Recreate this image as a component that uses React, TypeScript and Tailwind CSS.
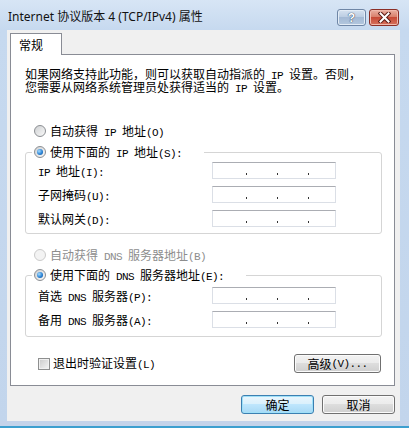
import React from "react";

const CJK = "font-['Noto_Sans_CJK_SC',sans-serif]";

function T({ s }: { s: string }) {
  const parts = s.split(/([\x00-\xff]+)/).filter((p) => p.length > 0);
  return (
    <>
      {parts.map((p, i) =>
        /^[\x00-\xff]+$/.test(p) ? (
          <span
            key={i}
            className="font-['Liberation_Mono',monospace] text-[11px] tracking-[-0.6px] whitespace-pre"
          >
            {p}
          </span>
        ) : (
          <span key={i}>{p}</span>
        )
      )}
    </>
  );
}

function Radio({ checked, disabled }: { checked?: boolean; disabled?: boolean }) {
  return (
    <span
      className={
        disabled
          ? "w-[12px] h-[12px] rounded-full border border-[#cbcbcb] bg-[#f3f3f3] flex items-center justify-center shrink-0"
          : "w-[12px] h-[12px] rounded-full border border-[#8b8e92] bg-[linear-gradient(135deg,#cfd1d3,#f9f9f9)] flex items-center justify-center shrink-0"
      }
    >
      {checked && (
        <span className="w-[6px] h-[6px] rounded-full bg-[radial-gradient(circle_at_35%_35%,#a6dcff,#2c84d6_55%,#0b4c93)]" />
      )}
    </span>
  );
}

function Checkbox() {
  return (
    <span className="w-[12px] h-[12px] border border-[#8e8f8f] bg-[linear-gradient(135deg,#c9c9c9,#f5f5f5)] shadow-[inset_0_0_0_1px_#f0f0f0] shrink-0" />
  );
}

function IpBox() {
  return (
    <div className="w-[124px] h-[17px] bg-white border border-[#dbdfe6] border-t-[#abadb3] flex items-end pb-[3px] pl-[33px] gap-[30px]">
      <span className="w-[1px] h-[2px] bg-[#333]" />
      <span className="w-[1px] h-[2px] bg-[#333]" />
      <span className="w-[1px] h-[2px] bg-[#333]" />
    </div>
  );
}

function Row({ label }: { label: string }) {
  return (
    <div className="flex items-center h-[17px]">
      <div className="w-[174px] pt-[2px]">
        <T s={label} />
      </div>
      <IpBox />
    </div>
  );
}

function Btn({ label, def, w }: { label: React.ReactNode; def?: boolean; w: string }) {
  return (
    <div
      className={
        (def
          ? "border-[#3c7fb1] bg-[linear-gradient(#eaf6fd,#d9f0fc_50%,#bee6fd_50%,#a7d9f5)] shadow-[inset_0_0_0_1px_#9fe0f8] "
          : "border-[#707070] bg-[linear-gradient(#f2f2f2,#ebebeb_50%,#dddddd_50%,#cfcfcf)] shadow-[inset_0_0_0_1px_#fbfbfb] ") +
        w +
        " h-[19px] border rounded-[3px] flex items-center justify-center text-[12px] leading-[14px] text-black"
      }
    >
      {label}
    </div>
  );
}

export default function App() {
  return (
    <div className="w-[409px] h-[428px] bg-[linear-gradient(180deg,#d7e5f5,#c6d9ef_30px,#c2d5ec)] flex flex-col overflow-hidden">
      {/* title bar */}
      <div className="h-[30px] flex justify-between pl-[8px] pr-[10px] shrink-0">
        <div className="pt-[9px] text-[12px] leading-[16px] text-[#111] font-['Noto_Sans','Noto_Sans_CJK_SC',sans-serif]">
          Internet 协议版本 4 (TCP/IPv4) 属性
        </div>
        <div className="pt-[9px] flex gap-[3px]">
          <div className="w-[29px] h-[17px] rounded-[3px] border border-[#6f86a6] bg-[linear-gradient(#d6e2f0,#b9cbe1_50%,#a4bad5_50%,#b3c7de)] shadow-[inset_0_0_0_1px_#e3ecf6] flex items-center justify-center">
            <span className="text-white text-[12px] leading-[12px] font-bold font-['Liberation_Sans',sans-serif] [text-shadow:0_0_1px_#2c3e57,0_0_1px_#2c3e57]">
              ?
            </span>
          </div>
          <div className="w-[30px] h-[17px] rounded-[3px] border border-[#8b2e26] bg-[linear-gradient(#eab0a2,#d9806c_45%,#c74a36_50%,#d5715d)] shadow-[inset_0_0_0_1px_#f0b9ac] flex items-center justify-center">
            <svg width="13" height="11" viewBox="0 0 13 11">
              <path d="M2.5 1.5 L10.5 9.5 M10.5 1.5 L2.5 9.5" stroke="#5a1a14" strokeWidth="4" strokeLinecap="square" />
              <path d="M2.5 1.5 L10.5 9.5 M10.5 1.5 L2.5 9.5" stroke="#ffffff" strokeWidth="2" strokeLinecap="square" />
            </svg>
          </div>
        </div>
      </div>

      {/* client */}
      <div className={"ml-[7px] w-[393px] h-[391px] bg-[#f0f0f0] pt-[3px] pl-[3px] pr-[5px] flex flex-col text-black " + CJK}>
        {/* tab header */}
        <div className="flex">
          <div className="relative z-10 w-[52px] h-[22px] mb-[-1px] bg-white border border-b-0 border-[#898c95] pl-[8px] pt-[4px] text-[12px] leading-[14px]">
            常规
          </div>
        </div>
        {/* panel */}
        <div className="w-[385px] h-[332px] bg-white border border-[#898c95] flex flex-col text-[12px] leading-[13px]">
          <div className="pl-[14px] pt-[12px]">
            <div className="h-[13px] whitespace-nowrap">
              <T s="如果网络支持此功能，则可以获取自动指派的 IP 设置。否则，" />
            </div>
            <div className="h-[13px] whitespace-nowrap">
              <T s="您需要从网络系统管理员处获得适当的 IP 设置。" />
            </div>
          </div>

          <div className="mt-[31px] ml-[23px] h-[14px] flex items-center gap-[4px]">
            <Radio />
            <span className="pt-[1px]">
              <T s="自动获得 IP 地址(O)" />
            </span>
          </div>

          <fieldset className="mt-[7px] ml-[14px] w-[357px] border border-[#d5d5d5] rounded-[3px] p-0 pb-[6px] m-0">
            <legend className="ml-[6px] pl-[2px] pr-[22px] h-[14px] flex items-center gap-[4px] p-0">
              <Radio checked />
              <span className="pt-[1px]">
                <T s="使用下面的 IP 地址(S):" />
              </span>
            </legend>
            <div className="pl-[12px] pt-[3px] flex flex-col gap-[7px]">
              <Row label="IP 地址(I):" />
              <Row label="子网掩码(U):" />
              <Row label="默认网关(D):" />
            </div>
          </fieldset>

          <div className="mt-[14px] ml-[23px] h-[14px] flex items-center gap-[4px] text-[#8d8d8d]">
            <Radio disabled />
            <span className="pt-[1px]">
              <T s="自动获得 DNS 服务器地址(B)" />
            </span>
          </div>

          <fieldset className="mt-[6px] ml-[14px] w-[357px] border border-[#d5d5d5] rounded-[3px] p-0 pb-[8px] m-0">
            <legend className="ml-[6px] pl-[2px] pr-[22px] h-[14px] flex items-center gap-[4px] p-0">
              <Radio checked />
              <span className="pt-[1px]">
                <T s="使用下面的 DNS 服务器地址(E):" />
              </span>
            </legend>
            <div className="pl-[12px] pt-[5px] flex flex-col gap-[7px]">
              <Row label="首选 DNS 服务器(P):" />
              <Row label="备用 DNS 服务器(A):" />
            </div>
          </fieldset>

          <div className="mt-[17px] pl-[27px] pr-[13px] flex items-center justify-between">
            <div className="flex items-center gap-[3px]">
              <Checkbox />
              <span className="pt-[1px]">
                <T s="退出时验证设置(L)" />
              </span>
            </div>
            <Btn w="w-[87px]" label={<T s="高级(V)..." />} />
          </div>
        </div>

        {/* buttons */}
        <div className="mt-[9px] flex justify-end gap-[8px]">
          <Btn w="w-[73px]" def label="确定" />
          <Btn w="w-[73px]" label="取消" />
        </div>
      </div>

      <div className="h-[5px] bg-[#c4d3ea] shrink-0" />
      <div className="h-[2px] bg-[#3d9fcf] shrink-0" />
    </div>
  );
}
